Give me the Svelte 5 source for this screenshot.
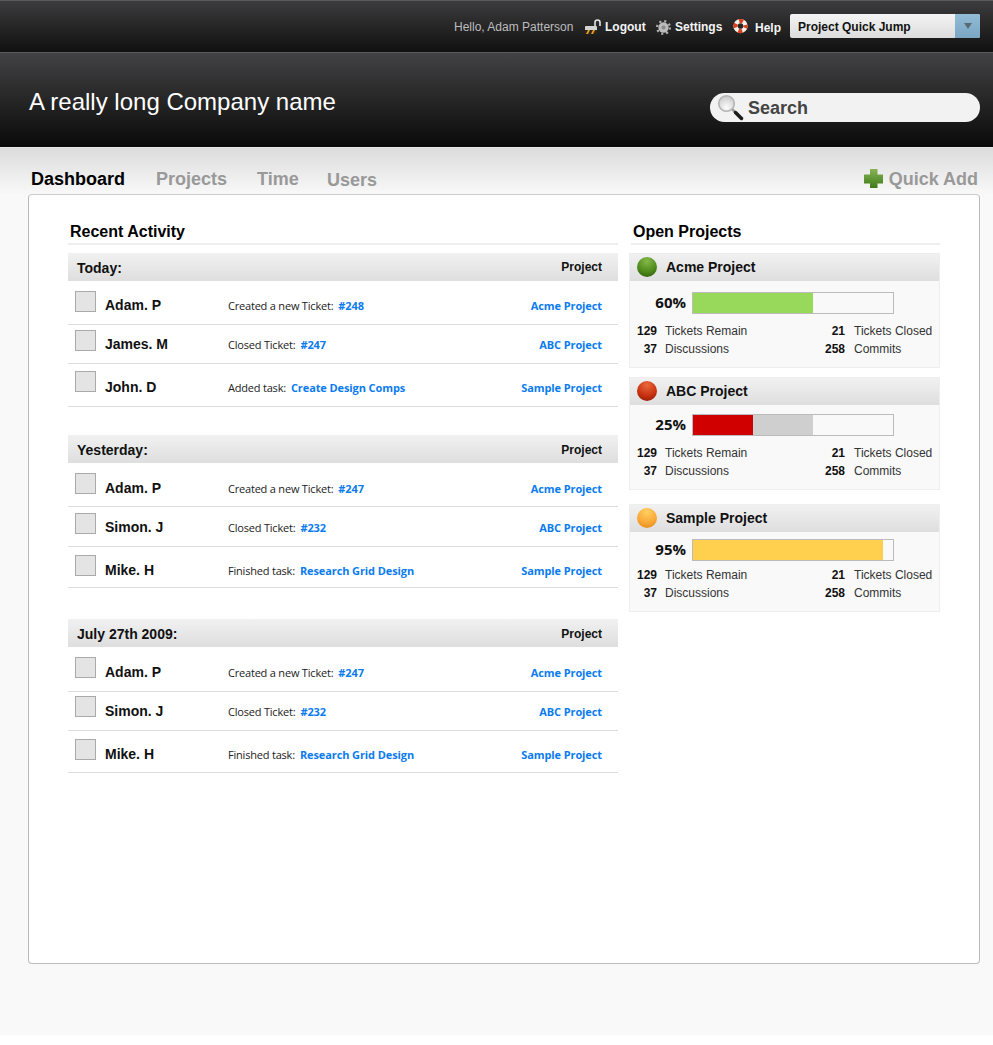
<script lang="ts">
  // h = row height, a = offset of the avatar from the top of the row, t = text offset below the avatar top
  const groups = [
    {
      title: 'Today:',
      cls: 'first',
      rows: [
        { name: 'Adam. P', action: 'Created a new Ticket:', link: '#248', project: 'Acme Project', h: 44, a: 10, t: 5 },
        { name: 'James. M', action: 'Closed Ticket:', link: '#247', project: 'ABC Project', h: 39, a: 5, t: 5 },
        { name: 'John. D', action: 'Added task:', link: 'Create Design Comps', project: 'Sample Project', h: 43, a: 7, t: 7 },
      ],
    },
    {
      title: 'Yesterday:',
      cls: 'second',
      rows: [
        { name: 'Adam. P', action: 'Created a new Ticket:', link: '#247', project: 'Acme Project', h: 44, a: 10, t: 6 },
        { name: 'Simon. J', action: 'Closed Ticket:', link: '#232', project: 'ABC Project', h: 40, a: 6, t: 5 },
        { name: 'Mike. H', action: 'Finished task:', link: 'Research Grid Design', project: 'Sample Project', h: 41, a: 8, t: 6 },
      ],
    },
    {
      title: 'July 27th 2009:',
      cls: 'third',
      rows: [
        { name: 'Adam. P', action: 'Created a new Ticket:', link: '#247', project: 'Acme Project', h: 45, a: 10, t: 6 },
        { name: 'Simon. J', action: 'Closed Ticket:', link: '#232', project: 'ABC Project', h: 39, a: 4, t: 6 },
        { name: 'Mike. H', action: 'Finished task:', link: 'Research Grid Design', project: 'Sample Project', h: 42, a: 8, t: 6 },
      ],
    },
  ];

  const projects = [
    { name: 'Acme Project', pct: 60, fill: 60, color: '#98d85b', dot: 'green', base: 0, cls: 'acme' },
    { name: 'ABC Project', pct: 25, fill: 30, color: '#d00000', dot: 'red', base: 60, cls: 'abc' },
    { name: 'Sample Project', pct: 95, fill: 95, color: '#ffcf4d', dot: 'orange', base: 0, cls: 'sample' },
  ];

  const dots: Record<string, [string, string, string]> = {
    green: ['#86b84a', '#4f8a1c', '#2c5a08'],
    red: ['#ea6a3a', '#c8300f', '#8c1c06'],
    orange: ['#ffd060', '#f8a838', '#e08818'],
  };
</script>

<div class="page">
  <div class="topbar">
    <span class="hello">Hello, Adam Patterson</span>
    <a class="toplink logout">
      <svg width="17" height="17" viewBox="0 0 17 17">
        <path d="M10 8V3.500a2.500 2.500 0 0 1 5 0V7" fill="none" stroke="#e4e4e4" stroke-width="1.600" />
        <rect x="0" y="7" width="12" height="8" rx="1" fill="#d4d4d4" />
        <rect x="0" y="11" width="12" height="4" fill="#2e2618" />
        <path d="M1 15l2-4h2l-2 4zM6 15l2-4h2l-2 4z" fill="#e8a020" />
      </svg>
      Logout
    </a>
    <a class="toplink settings">
      <svg width="15" height="15" viewBox="0 0 16 16">
        <circle cx="8" cy="8" r="5.500" fill="#bcbcbc" />
        <circle cx="8" cy="8" r="6.800" fill="none" stroke="#b0b0b0" stroke-width="2.400" stroke-dasharray="2.200 3.140" />
        <circle cx="8" cy="8" r="2.200" fill="#8a8a8a" />
      </svg>
      Settings
    </a>
    <a class="toplink help">
      <svg width="15" height="16" viewBox="0 0 16 16">
        <circle cx="8" cy="8" r="5.300" fill="none" stroke="#f4f0ea" stroke-width="4.600" />
        <circle cx="8" cy="8" r="5.300" fill="none" stroke="#d8401c" stroke-width="4.600" stroke-dasharray="4.160 4.165" stroke-dashoffset="2.080" />
      </svg>
      <span>Help</span>
    </a>
    <div class="jump">
      <span class="jump-label">Project Quick Jump</span>
      <span class="jump-arrow"><i></i></span>
    </div>
  </div>

  <header class="masthead">
    <h1>A really long Company name</h1>
    <div class="search">
      <svg width="28" height="28" viewBox="0 0 28 28">
        <defs>
          <radialGradient id="lens" cx="0.5" cy="0.75" r="0.75">
            <stop offset="0" stop-color="#fcfcfc" />
            <stop offset="1" stop-color="#c8c8c8" />
          </radialGradient>
        </defs>
        <path d="M15 15l3 3" stroke="#999" stroke-width="2.500" />
        <path d="M18.500 18.500l6 6" stroke="#1c1c1c" stroke-width="3.500" stroke-linecap="round" />
        <circle cx="9.500" cy="9.500" r="7.800" fill="url(#lens)" stroke="#b4b4b4" stroke-width="1.600" />
      </svg>
      <span>Search</span>
    </div>
  </header>

  <div class="subhead">
    <nav class="tabs">
      <a class="tab active">Dashboard</a>
      <a class="tab projects">Projects</a>
      <a class="tab time">Time</a>
      <a class="tab users">Users</a>
    </nav>
    <a class="quick">
      <svg width="19" height="19" viewBox="0 0 19 19">
        <defs>
          <linearGradient id="plus" x1="0" y1="0" x2="0" y2="1">
            <stop offset="0" stop-color="#86b456" />
            <stop offset="1" stop-color="#3f7a18" />
          </linearGradient>
        </defs>
        <path d="M6 0h7.500v5.500H19v9h-5.500V19H6v-4.500H0v-9h6z" fill="url(#plus)" />
      </svg>
      Quick Add
    </a>
  </div>

  <main class="panel">
    <section class="activity">
      <h2>Recent Activity</h2>
      {#each groups as group}
        <div class="group {group.cls}">
          <div class="group-head">
            <span class="group-title">{group.title}</span>
            <span class="group-col">Project</span>
          </div>
          {#each group.rows as row}
            <div class="row" style="height: {row.h}px; padding-top: {row.a}px; --t: {row.t}px">
              <span class="avatar"></span>
              <span class="who">{row.name}</span>
              <span class="what">{row.action}<a>{row.link}</a></span>
              <a class="proj">{row.project}</a>
            </div>
          {/each}
        </div>
      {/each}
    </section>

    <aside class="open">
      <h2>Open Projects</h2>
      {#each projects as p}
        <div class="card {p.cls}">
          <div class="card-head">
            <svg width="20" height="20" viewBox="0 0 20 20">
              <defs>
                <radialGradient id="dot-{p.dot}" cx="0.5" cy="0.2" r="0.9">
                  <stop offset="0" stop-color={dots[p.dot][0]} />
                  <stop offset="0.6" stop-color={dots[p.dot][1]} />
                  <stop offset="1" stop-color={dots[p.dot][2]} />
                </radialGradient>
              </defs>
              <circle cx="10" cy="10" r="10" fill="url(#dot-{p.dot})" />
            </svg>
            <span>{p.name}</span>
          </div>
          <div class="progress">
            <span class="pct">{p.pct}%</span>
            <div class="bar">
              {#if p.base}<div class="fill base" style="width: {p.base}%"></div>{/if}
              <div class="fill" style="width: {p.fill}%; background: {p.color}"></div>
            </div>
          </div>
          <div class="stats">
            <b>129</b><span>Tickets Remain</span><b>21</b><span class="last">Tickets Closed</span>
            <b>37</b><span>Discussions</span><b>258</b><span class="last">Commits</span>
          </div>
        </div>
      {/each}
    </aside>
  </main>
  <div class="foot"></div>
</div>

<style>
  :global(body) {
    background: #fff;
  }
  .page {
    width: 993px;
    height: 1045px;
    overflow: hidden;
    font-family: "Liberation Sans", Arial, sans-serif;
    background: linear-gradient(#dcdcdc 148px, #f9f9f9 195px);
    display: flex;
    flex-direction: column;
  }
  h1, h2 {
    margin: 0;
  }

  .topbar {
    height: 53px;
    flex: none;
    box-sizing: border-box;
    border-top: 1px solid #5a5a5c;
    border-bottom: 1px solid #5c5c5c;
    background: linear-gradient(#3c3c3e, #101010);
    display: flex;
    align-items: center;
    padding: 1px 13px 0 454px;
    font-size: 12px;
    color: #fff;
  }
  .hello {
    color: #bdbdbd;
    width: 130px;
  }
  .toplink {
    display: flex;
    align-items: center;
    font-weight: bold;
    color: #f4f4f4;
  }
  .logout {
    width: 72px;
    gap: 3px;
  }
  .logout svg {
    margin-left: 1px;
  }
  .settings {
    width: 77px;
    gap: 4px;
  }
  .help {
    width: 57px;
    gap: 7px;
  }
  .help svg {
    margin-top: -2px;
  }
  .help span {
    margin-top: 2px;
  }
  .jump {
    width: 190px;
    height: 24px;
    margin-top: -2px;
    border-radius: 2px;
    display: flex;
    overflow: hidden;
    background: linear-gradient(#f4f4f4, #dcdcdc);
    color: #111;
    font-weight: bold;
  }
  .jump-label {
    flex: 1;
    padding-left: 8px;
    line-height: 26px;
  }
  .jump-arrow {
    width: 25px;
    background: linear-gradient(#92bbd6, #7aa6c4);
    display: flex;
    align-items: center;
    justify-content: center;
  }
  .jump-arrow i {
    border: 4px solid transparent;
    border-top: 6px solid #5a6a74;
    border-bottom: 0;
  }

  .masthead {
    height: 95px;
    flex: none;
    box-sizing: border-box;
    border-bottom: 1px solid #e6e6e6;
    background: linear-gradient(#424244, #0a0a0a);
    display: flex;
    justify-content: space-between;
    padding: 35px 13px 0 29px;
  }
  h1 {
    font-size: 24px;
    line-height: 28px;
    font-weight: normal;
    color: #fff;
  }
  .search {
    width: 270px;
    height: 29px;
    margin-top: 5px;
    box-sizing: border-box;
    border-radius: 15px;
    background: #f2f2f2;
    display: flex;
    align-items: center;
    gap: 9px;
    padding-left: 8px;
    font-size: 18px;
    font-weight: bold;
    color: #444;
  }
  .search span {
    margin-top: 2px;
  }
  .search svg {
    margin: 1px -6px 0 -1px;
  }

  .subhead {
    height: 46px;
    flex: none;
    display: flex;
    justify-content: space-between;
    align-items: flex-start;
    padding: 21px 15px 0 31px;
    box-sizing: border-box;
    font-size: 18px;
    font-weight: bold;
    color: #999;
  }
  .tabs {
    display: flex;
  }
  .tab {
    line-height: 21px;
  }
  .active {
    color: #000;
    width: 125px;
  }
  .projects {
    width: 101px;
  }
  .time {
    width: 70px;
  }
  .users {
    margin-top: 1px;
  }
  .quick {
    display: flex;
    align-items: center;
    gap: 6px;
    line-height: 21px;
  }
  .quick svg {
    margin-top: -3px;
  }

  .panel {
    width: 952px;
    height: 770px;
    margin-left: 28px;
    box-sizing: border-box;
    border: 1px solid #bbb;
    border-top-color: #ccc;
    border-radius: 4px;
    background: #fff;
    display: flex;
    padding: 24px 0 0 39px;
    flex: none;
  }
  h2 {
    font-size: 16px;
    line-height: 22px;
    color: #000;
    padding: 2px 0 0 2px;
    border-bottom: 2px solid #eee;
    margin-bottom: 8px;
  }
  .activity {
    width: 550px;
  }
  .group.second {
    margin-top: 28px;
  }
  .group.third {
    margin-top: 31px;
  }
  .group-head {
    height: 28px;
    box-sizing: border-box;
    background: linear-gradient(#f1f1f1, #dedede);
    display: flex;
    justify-content: space-between;
    align-items: center;
    padding: 2px 16px 0 9px;
    font-weight: bold;
    color: #111;
  }
  .group-title {
    font-size: 14px;
  }
  .group-col {
    font-size: 12px;
    margin-top: -2px;
  }
  .second .group-col, .third .group-col {
    margin-top: 0;
  }
  .row {
    box-sizing: border-box;
    border-bottom: 1px solid #ddd;
    display: flex;
    align-items: flex-start;
    padding: 0 16px 0 7px;
  }
  .avatar {
    width: 21px;
    height: 21px;
    flex: none;
    box-sizing: border-box;
    border: 1px solid #aaa;
    background: #e4e4e4;
    margin-right: 9px;
  }
  .who {
    width: 123px;
    margin-top: var(--t);
    line-height: 18px;
    font-size: 14px;
    font-weight: bold;
    color: #111;
  }
  .what {
    flex: 1;
    margin-top: calc(var(--t) + 1px);
    line-height: 18px;
    font-family: "Open Sans", sans-serif;
    font-size: 11px;
    letter-spacing: -0.2px;
    color: #222;
  }
  .what a {
    margin-left: 5px;
    letter-spacing: -0.1px;
  }
  .what a, .proj {
    font-family: "Open Sans", sans-serif;
    font-size: 11px;
    font-weight: bold;
    color: #0a7bf0;
  }
  .proj {
    margin-top: calc(var(--t) + 1px);
    line-height: 18px;
    letter-spacing: -0.1px;
  }

  .open {
    width: 311px;
    margin-left: 11px;
  }
  .open h2 {
    margin-left: 2px;
  }
  .card {
    box-sizing: border-box;
    border: 1px solid #eee;
    background: #f9f9f9;
    padding-bottom: 9px;
  }
  .card.abc {
    margin-top: 9px;
  }
  .card.sample {
    margin-top: 14px;
  }
  .card-head {
    height: 27px;
    box-sizing: border-box;
    padding: 0 0 1px 7px;
    background: linear-gradient(#f1f1f1, #dedede);
    display: flex;
    align-items: center;
    gap: 9px;
    font-size: 14px;
    font-weight: bold;
    color: #111;
  }
  .progress {
    display: flex;
    align-items: center;
    gap: 6px;
    margin-top: 11px;
  }
  .abc .progress {
    margin-top: 9px;
  }
  .sample .progress {
    margin-top: 7px;
  }
  .pct {
    width: 56px;
    margin-top: -2px;
    text-align: right;
    font-family: "Open Sans", sans-serif;
    font-size: 15px;
    font-weight: bold;
    color: #111;
  }
  .bar {
    position: relative;
    width: 202px;
    height: 22px;
    box-sizing: border-box;
    border: 1px solid #bbb;
    background: #f9f9f9;
  }
  .fill {
    position: absolute;
    left: 0;
    top: 0;
    bottom: 0;
  }
  .fill.base {
    background: #cfcfcf;
  }
  .stats {
    display: grid;
    grid-template-columns: 27px 132px 40px auto;
    column-gap: 8px;
    margin-top: 8px;
    font-size: 12px;
    line-height: 18px;
    color: #333;
    white-space: nowrap;
  }
  .sample .stats {
    margin-top: 5px;
  }
  .stats b {
    text-align: right;
    color: #111;
  }
  .stats .last {
    margin-left: 1px;
  }
  .foot {
    flex: 1;
    background: linear-gradient(#f9f9f9 71px, #fff 71px);
  }
</style>
